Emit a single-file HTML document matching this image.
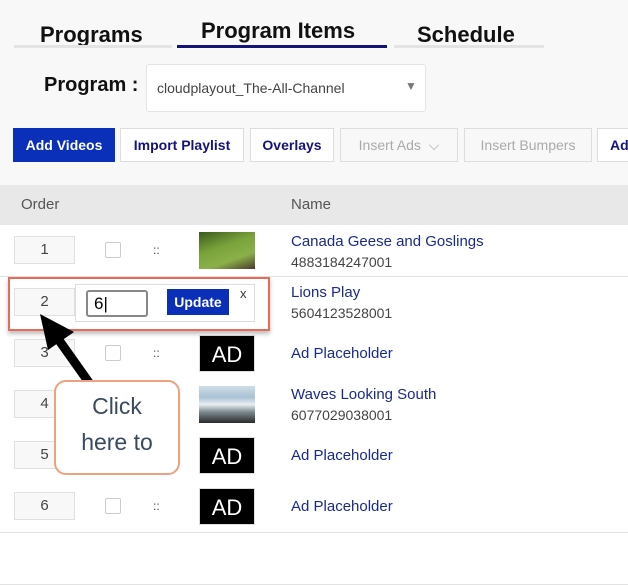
<!DOCTYPE html><html><head><style>
body{margin:0;width:628px;height:538px;overflow:hidden;background:#f8f8f8;font-family:"Liberation Sans",sans-serif;position:relative}
.a{position:absolute}
.tab{font-weight:bold;font-size:22px;color:#111}
.btn{position:absolute;top:128px;height:34px;box-sizing:border-box;border:1px solid #ddd;background:#fff;font-size:14px;font-weight:bold;color:#13137a;line-height:32px;text-align:center}
.dis{color:#aaa;font-weight:normal;background:#f8f8f8}
.row{position:absolute;left:0;width:628px;height:51px;background:#fff;border-bottom:1px solid #e2e2e2}
.ord{position:absolute;left:14px;top:11px;width:61px;height:28px;box-sizing:border-box;border:1px solid #e0e0e0;background:#f8f8f8;text-align:center;line-height:26px;font-size:15px;color:#444}
.cb{position:absolute;left:105px;top:17px;width:14px;height:14px;border:1px solid #ccc;border-radius:2px;background:#fff}
.dd{position:absolute;left:153px;top:18px;font-size:12px;color:#444}
.th{position:absolute;left:199px;top:7px;width:56px;height:37px}
.ad{background:#000;color:#fff;font-size:22px;text-align:center;line-height:37px;border:1px solid #ddd;box-sizing:border-box}
.nm{position:absolute;left:291px;font-size:15px;color:#1a2a8a}
.id{position:absolute;left:291px;font-size:14px;color:#444}
</style></head><body>
<div class="a tab" style="left:40px;top:22px">Programs</div>
<div class="a" style="left:14px;top:45px;width:158px;height:3px;background:#e4e4e4"></div>
<div class="a tab" style="left:201px;top:18px">Program Items</div>
<div class="a" style="left:177px;top:45px;width:210px;height:3px;background:#13137a"></div>
<div class="a tab" style="left:417px;top:22px">Schedule</div>
<div class="a" style="left:394px;top:45px;width:150px;height:3px;background:#e4e4e4"></div>
<div class="a" style="left:44px;top:74px;font-size:20px;font-weight:bold;color:#111">Program :</div>
<div class="a" style="left:146px;top:64px;width:278px;height:46px;background:#fff;border:1px solid #e4e4e4;border-radius:3px"><span class="a" style="left:10px;top:15px;font-size:14px;color:#444">cloudplayout_The-All-Channel</span><span class="a" style="left:258px;top:14px;font-size:12px;color:#777">▼</span></div>
<div class="btn" style="left:13px;width:102px;background:#0a2fb8;color:#fff;border-color:#0a2fb8">Add Videos</div>
<div class="btn" style="left:120px;width:124px">Import Playlist</div>
<div class="btn" style="left:250px;width:84px">Overlays</div>
<div class="btn dis" style="left:340px;width:118px">Insert Ads &nbsp;⌵</div>
<div class="btn dis" style="left:464px;width:128px">Insert Bumpers</div>
<div class="btn" style="left:597px;width:40px;text-align:left;padding-left:12px">Ad</div>
<div class="a" style="left:0;top:185px;width:628px;height:40px;background:#e8e8e8"><span class="a" style="left:21px;top:11px;font-size:15px;color:#555">Order</span><span class="a" style="left:291px;top:11px;font-size:15px;color:#555">Name</span></div>
<div class="row" style="top:225px"><div class="ord">1</div><div class="cb"></div><div class="dd">::</div><div class="th" style="background:linear-gradient(160deg,#3c5a1e,#7aa33a 40%,#8bb04a 70%,#4a3a2a)"></div><div class="nm" style="top:8px">Canada Geese and Goslings</div><div class="id" style="top:29px">4883184247001</div></div>
<div class="row" style="top:277px"><div class="ord">2</div><div class="th" style="left:240px;width:15px;background:#b09070"></div><div class="nm" style="top:7px">Lions Play</div><div class="id" style="top:28px">5604123528001</div></div>
<div class="row" style="top:328px"><div class="ord">3</div><div class="cb"></div><div class="dd">::</div><div class="th ad">AD</div><div class="nm" style="top:17px">Ad Placeholder</div></div>
<div class="row" style="top:379px"><div class="ord">4</div><div class="th" style="background:linear-gradient(180deg,#cfdde8 0,#aac2d4 30%,#e8eef2 50%,#7c8a90 70%,#2a2a2a)"></div><div class="nm" style="top:7px">Waves Looking South</div><div class="id" style="top:28px">6077029038001</div></div>
<div class="row" style="top:430px"><div class="ord">5</div><div class="th ad">AD</div><div class="nm" style="top:17px">Ad Placeholder</div></div>
<div class="row" style="top:481px"><div class="ord">6</div><div class="cb"></div><div class="dd">::</div><div class="th ad">AD</div><div class="nm" style="top:17px">Ad Placeholder</div></div>
<div class="row" style="top:533px"></div>
<div class="a" style="left:8px;top:277px;width:258px;height:50px;border:2px solid #e86a5a;box-shadow:0 3px 4px rgba(0,0,0,.25)"></div>
<div class="a" style="left:75px;top:284px;width:178px;height:36px;background:#fff;border:1px solid #ddd"></div>
<div class="a" style="left:86px;top:290px;width:56px;height:23px;border:2px solid #888;border-radius:3px;background:#fff;font-size:17px;line-height:23px;padding-left:6px;box-sizing:content-box;width:52px">6|</div>
<div class="a" style="left:167px;top:289px;width:62px;height:26px;background:#0a2fb8;color:#fff;font-weight:bold;font-size:14px;text-align:center;line-height:26px">Update</div>
<div class="a" style="left:240px;top:286px;font-size:13px;color:#333">x</div>
<svg class="a" style="left:0;top:0" width="628" height="538"><line x1="90" y1="384" x2="56" y2="336" stroke="#000" stroke-width="9"/><polygon points="40,314 74,332 48,350" fill="#000"/></svg>
<div class="a" style="left:54px;top:380px;width:126px;height:95px;background:#fff;border:2px solid #f0a080;border-radius:12px;text-align:center;font-size:23px;color:#3a4a5e;line-height:36px;padding-top:6px;box-sizing:border-box">Click<br>here to</div>
</body></html>
